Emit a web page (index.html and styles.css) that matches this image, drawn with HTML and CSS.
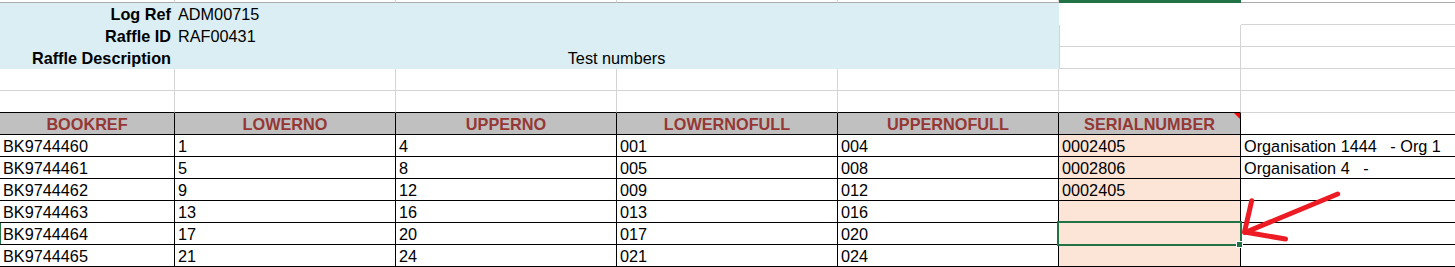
FILE: index.html
```html
<!DOCTYPE html>
<html lang="en">
<head>
<meta charset="utf-8">
<title>Raffle numbers</title>
<link rel="stylesheet" href="styles.css">
</head>
<body>
<div class="sheet">
  <div class="ch"></div><div class="ch"></div><div class="ch"></div><div class="ch"></div><div class="ch"></div><div class="ch ch-sel"></div><div class="ch ch-last"></div>

  <div class="c info lbl">Log Ref</div>
  <div class="c info span4">ADM00715</div>
  <div class="c white-fill"></div>
  <div class="c g"></div>

  <div class="c info lbl">Raffle ID</div>
  <div class="c info span4">RAF00431</div>
  <div class="c f-side"></div>
  <div class="c g"></div>

  <div class="c info lbl">Raffle Description</div>
  <div class="c info span4 center">Test numbers</div>
  <div class="c f-side"></div>
  <div class="c g"></div>

  <div class="c"></div><div class="c"></div><div class="c"></div><div class="c"></div><div class="c"></div><div class="c"></div><div class="c g"></div>

  <div class="c top-edge"></div><div class="c top-edge"></div><div class="c top-edge"></div><div class="c top-edge"></div><div class="c top-edge"></div><div class="c top-edge"></div><div class="c g"></div>

  <div class="c hd">BOOKREF</div>
  <div class="c hd">LOWERNO</div>
  <div class="c hd">UPPERNO</div>
  <div class="c hd">LOWERNOFULL</div>
  <div class="c hd">UPPERNOFULL</div>
  <div class="c hd has-note">SERIALNUMBER</div>
  <div class="c g dg"></div>

  <div class="c d">BK9744460</div><div class="c d">1</div><div class="c d">4</div><div class="c d">001</div><div class="c d">004</div><div class="c d ser">0002405</div><div class="c g dg">Organisation 1444   - Org 1</div>

  <div class="c d">BK9744461</div><div class="c d">5</div><div class="c d">8</div><div class="c d">005</div><div class="c d">008</div><div class="c d ser">0002806</div><div class="c g dg">Organisation 4   -</div>

  <div class="c d">BK9744462</div><div class="c d">9</div><div class="c d">12</div><div class="c d">009</div><div class="c d">012</div><div class="c d ser">0002405</div><div class="c g dg"></div>

  <div class="c d">BK9744463</div><div class="c d">13</div><div class="c d">16</div><div class="c d">013</div><div class="c d">016</div><div class="c d ser"></div><div class="c g dg"></div>

  <div class="c d row-sel">BK9744464</div><div class="c d">17</div><div class="c d">20</div><div class="c d">017</div><div class="c d">020</div><div class="c d ser active"><span class="sel-box"></span><span class="fill-handle"></span></div><div class="c g dg"></div>

  <div class="c d">BK9744465</div><div class="c d">21</div><div class="c d">24</div><div class="c d">021</div><div class="c d">024</div><div class="c d ser"></div><div class="c g dg"></div>

  <svg class="arrow" width="120" height="64" viewBox="0 0 120 64" aria-hidden="true">
    <line x1="107.7" y1="9" x2="15" y2="47.5"/>
    <polyline points="21.7,15.7 14.5,47 55.5,54"/>
  </svg>
</div>
</body>
</html>
```
FILE: styles.css
```css
html, body {
  margin: 0;
  padding: 0;
  background: #ffffff;
  overflow: hidden;
}

body {
  width: 1455px;
  height: 267px;
  font-family: "Liberation Sans", Arial, sans-serif;
  font-size: 16.25px;
  color: #000000;
}

.sheet {
  position: relative;
  display: grid;
  grid-template-columns: 175px 221px 221px 221px 221px 182px 1fr;
  grid-template-rows: 3px repeat(12, 22px);
}

/* column-header bottom strip */
.ch {
  box-sizing: border-box;
  border-right: 1px solid #d4d4d4;
  border-bottom: 1px solid #ababab;
}
.ch-sel {
  background: #217346;
  border-color: #217346;
}
.ch-last {
  border-right: none;
}

/* generic cell */
.c {
  box-sizing: border-box;
  border-right: 1px solid #d4d4d4;
  border-bottom: 1px solid #d4d4d4;
  display: flex;
  align-items: flex-end;
  padding: 0 3px;
  line-height: 19px;
  white-space: pre;
  overflow: hidden;
  min-width: 0;
}
.g {
  border-right: none;
  overflow: visible;
}

/* info block */
.info {
  background: #daeef3;
  border-color: transparent;
}
.lbl {
  justify-content: flex-end;
  font-weight: bold;
}
.span4 {
  grid-column: span 4;
}
.center {
  justify-content: center;
}
.white-fill {
  background: #ffffff;
  border-color: transparent;
}
.f-side {
  box-shadow: inset 1px 0 0 #d4d4d4;
}

.top-edge {
  border-bottom-color: #000000;
}

/* table header */
.hd {
  position: relative;
  background: #c0c0c0;
  border-right-color: #000000;
  border-bottom-color: #000000;
  justify-content: center;
  font-weight: bold;
  color: #953735;
  line-height: 20px;
}
.has-note::after {
  content: "";
  position: absolute;
  top: 0;
  right: 0;
  border-top: 6px solid #ff0000;
  border-left: 6px solid transparent;
}

/* data rows */
.d {
  border-right-color: #000000;
  border-bottom-color: #000000;
}
.dg {
  border-bottom-color: #000000;
}
.ser {
  background: #fce4d6;
}
.row-sel {
  box-shadow: inset 1px 0 0 #217346;
}

/* active cell */
.active {
  position: relative;
  overflow: visible;
}
.sel-box {
  position: absolute;
  left: -2px;
  top: -2px;
  width: 185px;
  height: 25px;
  box-sizing: border-box;
  border: 2px solid #217346;
}
.fill-handle {
  position: absolute;
  left: 177px;
  top: 18px;
  width: 5px;
  height: 5px;
  background: #217346;
  border: 1px solid #ffffff;
}

/* annotation arrow */
.arrow {
  position: absolute;
  left: 1230px;
  top: 185px;
  overflow: visible;
}
.arrow line,
.arrow polyline {
  fill: none;
  stroke: #ed1c24;
  stroke-width: 5;
  stroke-linecap: round;
  stroke-linejoin: round;
}
```
